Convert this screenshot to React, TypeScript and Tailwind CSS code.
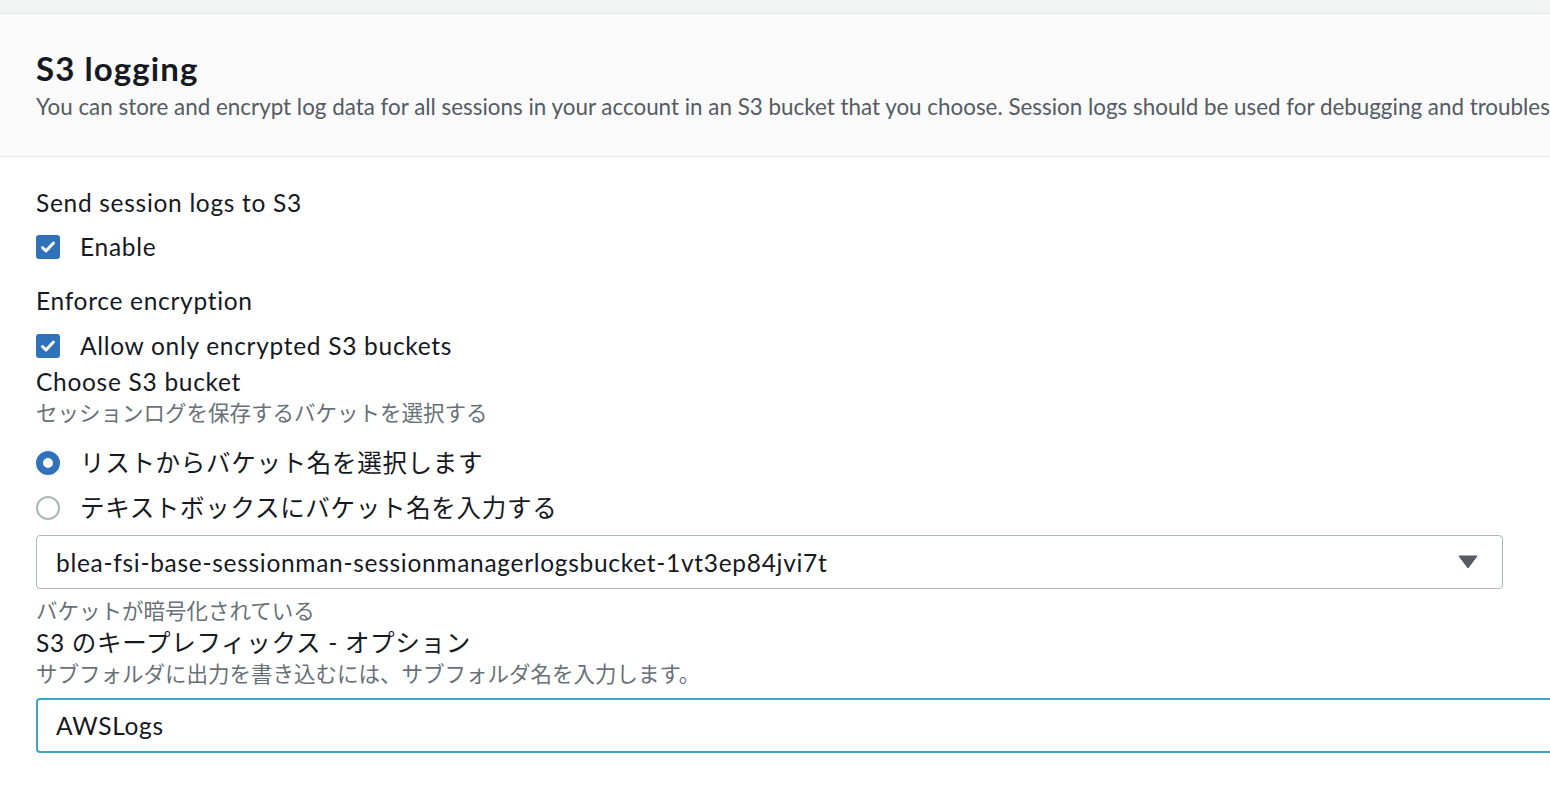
import React from "react";

const font = { fontFamily: "Lato, 'Noto Sans CJK JP', sans-serif" };

function Checkbox() {
    return (
        <span className="flex h-[24px] w-[24px] shrink-0 items-center justify-center rounded-[3px] bg-[#2f72ba]">
            <svg width="18" height="18" viewBox="0 0 18 18" fill="none">
                <path d="M3.5 9.5l3.5 3.5 7.5-8" stroke="#ffffff" strokeWidth="3" strokeLinecap="round" strokeLinejoin="round" />
            </svg>
        </span>
    );
}

function Radio({ checked }: { checked: boolean }) {
    return checked ? (
        <span className="h-[24px] w-[24px] shrink-0 rounded-full border-[7px] border-[#2f72ba] bg-white" />
    ) : (
        <span className="h-[24px] w-[24px] shrink-0 rounded-full border-2 border-[#aab7b8] bg-white" />
    );
}

export default function App() {
    return (
        <div className="h-[786px] w-[1550px] overflow-hidden bg-white text-[#16191f] [font-variant-ligatures:none]" style={font}>
            <div className="h-[14px] border-b border-[#e4e7e8] bg-[#f2f3f3]" />

            {/* header */}
            <div className="h-[143px] overflow-hidden whitespace-nowrap border-b border-[#e4e7e8] bg-[#fafafa] px-[36px] pt-[34px]">
                <h2 className="text-[33px] font-bold leading-[40px] tracking-[1.1px]">S3 logging</h2>
                <p className="mt-[4px] text-[22.4px] leading-[30px] text-[#545b64]">
                    You can store and encrypt log data for all sessions in your account in an S3 bucket that you choose. Session logs should be used for debugging and troubleshooting purposes only.
                </p>
            </div>

            {/* form */}
            <div className="px-[36px] pt-[28px] text-[24.5px] leading-[35px] tracking-[0.7px]">
                <div>Send session logs to S3</div>
                <label className="mt-[9px] flex items-center gap-[20px]">
                    <Checkbox />
                    <span>Enable</span>
                </label>

                <div className="mt-[19px]">Enforce encryption</div>
                <label className="mt-[10px] flex items-center gap-[20px]">
                    <Checkbox />
                    <span>Allow only encrypted S3 buckets</span>
                </label>

                <div className="mt-[1px]">Choose S3 bucket</div>
                <div className="text-[21.5px] leading-[28px] tracking-normal text-[#687078]">セッションログを保存するバケットを選択する</div>

                <div className="mt-[18px] flex items-center gap-[20px]">
                    <Radio checked />
                    <span>リストからバケット名を選択します</span>
                </div>
                <div className="mt-[10px] flex items-center gap-[20px]">
                    <Radio checked={false} />
                    <span>テキストボックスにバケット名を入力する</span>
                </div>

                <div className="mt-[10px] flex h-[54px] w-[1467px] items-center justify-between rounded-[4px] border border-[#aab7b8] pl-[19px] pr-[24px]">
                    <span>blea-fsi-base-sessionman-sessionmanagerlogsbucket-1vt3ep84jvi7t</span>
                    <svg width="20" height="14" viewBox="0 0 20 14">
                        <path d="M1 1h18l-9 12z" fill="#545b64" stroke="#545b64" strokeWidth="1" strokeLinejoin="round" />
                    </svg>
                </div>

                <div className="mt-[8px] text-[21.5px] leading-[28px] tracking-normal text-[#687078]">バケットが暗号化されている</div>
                <div className="-mt-[0.5px]">S3 のキープレフィックス - オプション</div>
                <div className="text-[21.5px] leading-[28px] tracking-normal text-[#687078]">サブフォルダに出力を書き込むには、サブフォルダ名を入力します。</div>

                <div className="mt-[10px] flex h-[55px] w-[1600px] items-center rounded-[4px] border-2 border-[#3fa2c8] pl-[18px]">
                    <span>AWSLogs</span>
                </div>
            </div>
        </div>
    );
}
